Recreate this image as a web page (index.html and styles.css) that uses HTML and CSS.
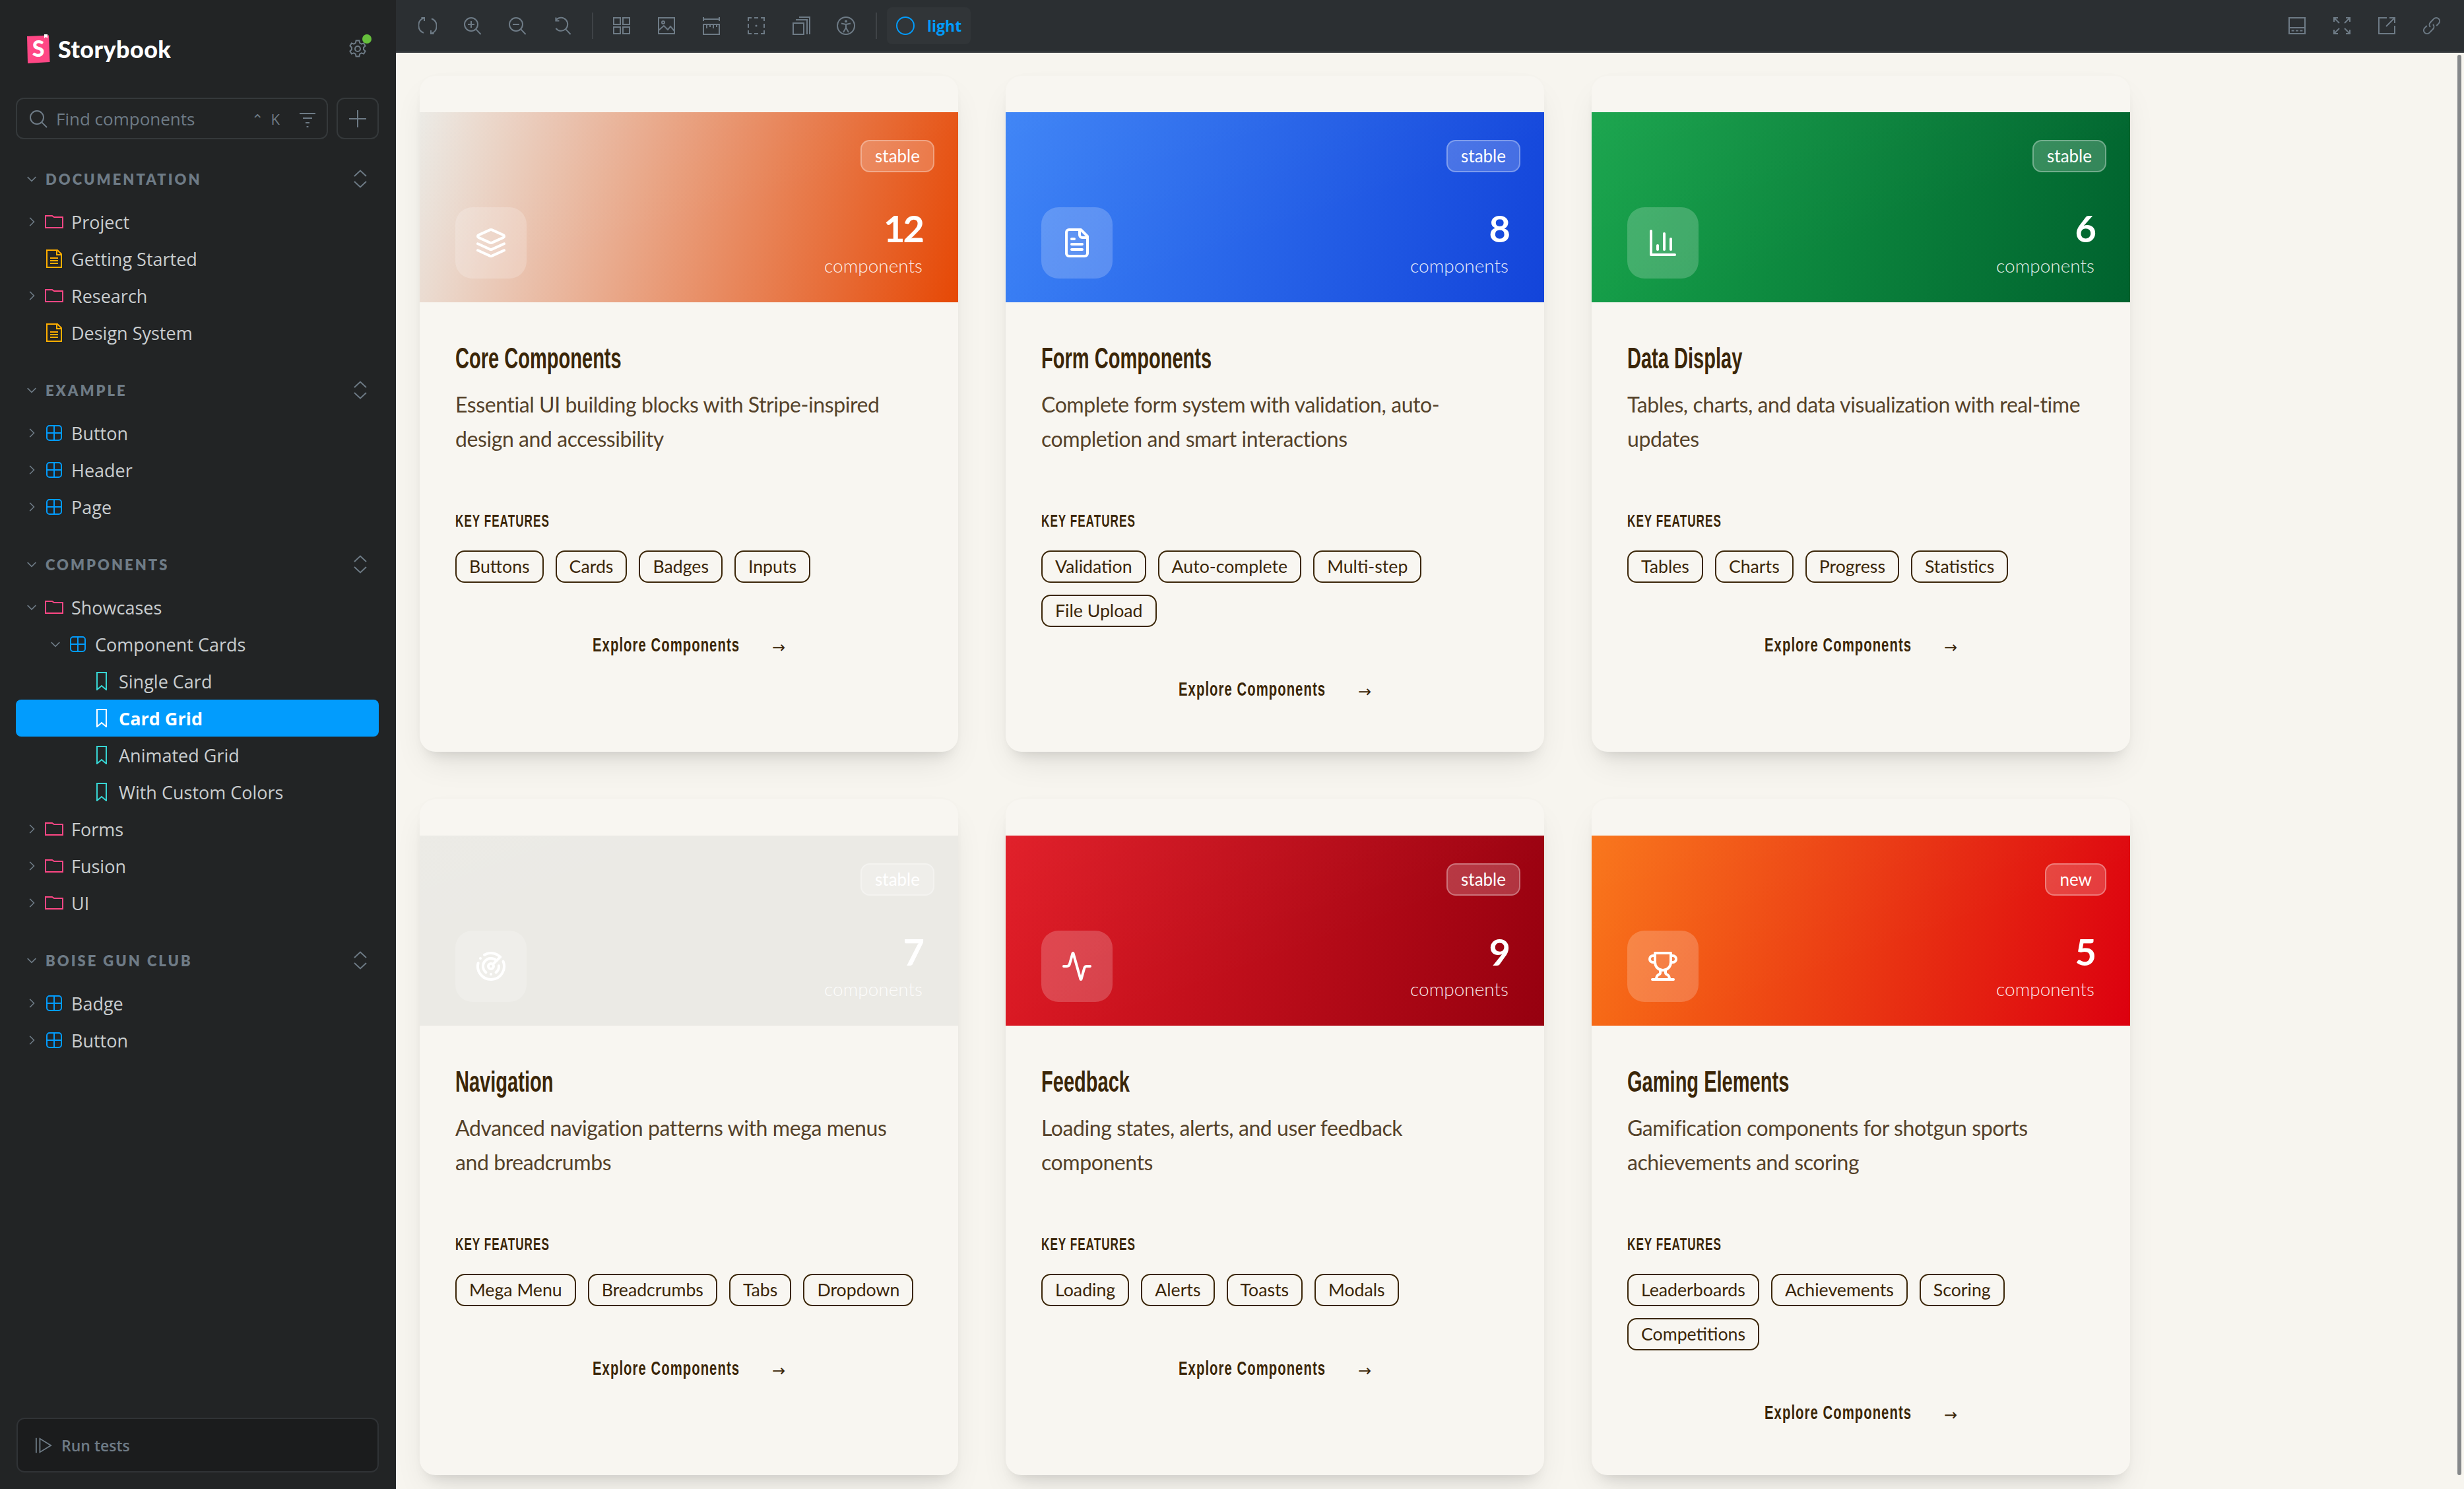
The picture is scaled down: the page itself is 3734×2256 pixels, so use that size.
FILE: index.html
```html
<!DOCTYPE html>
<html lang="en">
<head>
  <meta charset="UTF-8" />
  <title>Showcases / Component Cards / Card Grid - Storybook</title>
  <link rel="stylesheet" href="styles.css">
</head>
<body>

<!-- shared icons -->
<svg class="sprite" xmlns="http://www.w3.org/2000/svg">
  <symbol id="i-down" viewBox="0 0 14 14"><path d="M1.5 4.5 7 10l5.500-5.500"/></symbol>
  <symbol id="i-right" viewBox="0 0 14 14"><path d="M4.500 1.500 10 7l-5.500 5.500"/></symbol>
  <symbol id="i-expand" viewBox="0 0 14 14"><path d="M2.500 5 7 .8 11.500 5M2.500 9 7 13.200 11.500 9"/></symbol>
  <symbol id="i-folder" viewBox="0 0 14 14"><path d="M.5 2.500h5l1.500 1h6.500v8H.5z"/></symbol>
  <symbol id="i-doc" viewBox="0 0 14 14"><path d="M1.500.5h8l3 3v10h-11zM9 .5V4h3.500M4 6.500h6M4 8.500h6M4 10.500h6"/></symbol>
  <symbol id="i-comp" viewBox="0 0 14 14"><rect x="1.500" y="1.500" width="11" height="11" rx="2"/><path d="M7 1.500v11M1.500 7h11"/></symbol>
  <symbol id="i-story" viewBox="0 0 14 14"><path d="M3.500.5h7v13L7 10.500l-3.500 3z"/></symbol>

  <symbol id="t-sync" viewBox="0 0 14 14"><path d="M4 1.200A6 6 0 0 0 4 12.400M10 1.600a6 6 0 0 1 0 11.200M2.200 1h2.300v2.500M11.800 13H9.500v-2.500"/></symbol>
  <symbol id="t-zoomin" viewBox="0 0 14 14"><circle cx="6" cy="6" r="5"/><path d="M9.700 9.700 13.300 13.500M6 3.500v5M3.500 6h5"/></symbol>
  <symbol id="t-zoomout" viewBox="0 0 14 14"><circle cx="6" cy="6" r="5"/><path d="M9.700 9.700 13.300 13.500M3.500 6h5"/></symbol>
  <symbol id="t-reset" viewBox="0 0 14 14"><path d="M2.600 2.300A5 5 0 1 1 2.200 9M2.200.8v2.500h2.500M9.700 9.700 13.300 13.500"/></symbol>
  <symbol id="t-grid" viewBox="0 0 14 14"><path d="M1 1h5v5H1zM8 1h5v5H8zM1 8h5v5H1zM8 8h5v5H8z"/></symbol>
  <symbol id="t-photo" viewBox="0 0 14 14"><rect x="1" y="1" width="12" height="12"/><circle cx="4.500" cy="4.500" r="1"/><path d="M1 10.500 5 7l3 3 2-2.500 3 3.500"/></symbol>
  <symbol id="t-ruler" viewBox="0 0 14 14"><path d="M1 .5v3M13 .5v3M1 2h12M1 6h12v7.500H1zM3.500 6v3M6 6v2M8.500 6v3M11 6v2"/></symbol>
  <symbol id="t-outline" viewBox="0 0 14 14"><path d="M1 3.500V1h2.500M5.500 1h3M10.500 1H13v2.500M13 5.500v3M13 10.500V13h-2.500M8.500 13h-3M3.500 13H1v-2.500M1 8.500v-3"/><circle class="solid" cx="7" cy="7" r=".8"/></symbol>
  <symbol id="t-layers" viewBox="0 0 14 14"><path d="M1 5h8v8.500H1zM3 2.500h8.500v11M5.500.5H13.500v13"/></symbol>
  <symbol id="t-access" viewBox="0 0 14 14"><circle cx="7" cy="7" r="6.500"/><circle class="solid" cx="7" cy="3.600" r="1"/><path d="M3.500 5.300 7 6l3.500-.7M7 6v2.500M7 8.500 5 12M7 8.500 9 12"/></symbol>
  <symbol id="t-panel" viewBox="0 0 14 14"><path d="M1 1h12v12H1zM1 8.500h12M2.800 10.800h2M6 10.800h2M9.200 10.800h2"/></symbol>
  <symbol id="t-full" viewBox="0 0 14 14"><path d="M1 4V1h3M1 1l4 4M13 4V1h-3M13 1 9 5M1 10v3h3M1 13l4-4M13 10v3h-3M13 13 9 9"/></symbol>
  <symbol id="t-share" viewBox="0 0 14 14"><path d="M7 1H1v12h12V7M9 1h4v4M13 1 6.500 7.500"/></symbol>
  <symbol id="t-link" viewBox="0 0 14 14"><path d="M6 8a2.500 2.500 0 0 1 0-3.500l2.700-2.800a2.500 2.500 0 0 1 3.600 3.600L10.600 7M8 6a2.500 2.500 0 0 1 0 3.500l-2.700 2.800a2.500 2.500 0 0 1-3.600-3.600L3.400 7"/></symbol>

  <symbol id="c-layers" viewBox="0 0 24 24"><path d="m12.830 2.180a2 2 0 0 0-1.660 0L2.600 6.080a1 1 0 0 0 0 1.830l8.580 3.910a2 2 0 0 0 1.660 0l8.580-3.900a1 1 0 0 0 0-1.830Z"/><path d="m22 17.650-9.170 4.160a2 2 0 0 1-1.660 0L2 17.650"/><path d="m22 12.650-9.170 4.160a2 2 0 0 1-1.660 0L2 12.650"/></symbol>
  <symbol id="c-file" viewBox="0 0 24 24"><path d="M15 2H6a2 2 0 0 0-2 2v16a2 2 0 0 0 2 2h12a2 2 0 0 0 2-2V7Z"/><path d="M14 2v4a2 2 0 0 0 2 2h4"/><path d="M10 9H8"/><path d="M16 13H8"/><path d="M16 17H8"/></symbol>
  <symbol id="c-chart" viewBox="0 0 24 24"><path d="M3 3v18h18"/><path d="M18 17V9"/><path d="M13 17V5"/><path d="M8 17v-3"/></symbol>
  <symbol id="c-radar" viewBox="0 0 24 24"><path d="M19.070 4.930A10 10 0 0 0 6.990 3.340"/><path d="M4 6h.01"/><path d="M2.290 9.620A10 10 0 1 0 21.310 8.350"/><path d="M16.240 7.760A6 6 0 1 0 8.230 16.670"/><path d="M12 18h.01"/><path d="M17.990 11.660A6 6 0 0 1 15.770 16.670"/><circle cx="12" cy="12" r="2"/><path d="m13.410 10.590 5.660-5.660"/></symbol>
  <symbol id="c-activity" viewBox="0 0 24 24"><path d="M22 12h-2.480a2 2 0 0 0-1.930 1.460l-2.350 8.360a.25.25 0 0 1-.48 0L9.240 2.180a.25.25 0 0 0-.48 0l-2.350 8.360A2 2 0 0 1 4.490 12H2"/></symbol>
  <symbol id="c-trophy" viewBox="0 0 24 24"><path d="M6 9H4.500a2.500 2.500 0 0 1 0-5H6"/><path d="M18 9h1.500a2.500 2.500 0 0 0 0-5H18"/><path d="M4 22h16"/><path d="M10 14.660V17c0 .55-.47.98-.97 1.210C7.850 18.750 7 20.240 7 22"/><path d="M14 14.660V17c0 .55.47.98.97 1.210C16.150 18.750 17 20.240 17 22"/><path d="M18 2H6v7a6 6 0 0 0 12 0V2Z"/></symbol>
</svg>

<div class="app">

  <aside class="sidebar">
    <div class="brand">
      <svg class="brand-mark" viewBox="0 0 36 44">
        <path class="brand-book" d="M1 3 34 1.500 35.500 42 2 44z"/>
        <path class="brand-tab" d="M27 0h5v6l-2.500-2L27 6z"/>
        <text class="brand-s" x="18" y="34" text-anchor="middle">S</text>
      </svg>
      <span class="brand-name">Storybook</span>
      <span class="gear">
        <svg class="gear-icon" viewBox="0 0 14 14"><circle cx="7" cy="7" r="2"/><path d="M5.800.8h2.400l.4 1.800 1.300.7 1.700-.6 1.200 2.100-1.300 1.200v1.500l1.300 1.200-1.200 2.100-1.700-.6-1.300.7-.4 1.800H5.800l-.4-1.800-1.300-.7-1.700.6L1.200 8.700l1.300-1.200V6L1.200 4.800l1.200-2.100 1.700.6 1.300-.7z"/></svg>
        <span class="gear-dot"></span>
      </span>
    </div>

    <div class="search-row">
      <div class="search">
        <svg class="search-icon" viewBox="0 0 14 14"><circle cx="6" cy="6" r="5"/><path d="M9.700 9.700 13.500 13.500"/></svg>
        <span class="search-text">Find components</span>
        <span class="search-key">⌃</span>
        <span class="search-key search-key--k">K</span>
        <svg class="search-filter" viewBox="0 0 14 14"><path d="M1 3h12M3.500 6.500h7M5.500 10h3M6.300 13h1.400"/></svg>
      </div>
      <div class="add">
        <svg class="add-icon" viewBox="0 0 14 14"><path d="M7 .5v13M.5 7h13"/></svg>
      </div>
    </div>

    <nav class="tree">
      <section class="group">
        <div class="group-head">
          <svg class="caret"><use href="#i-down"/></svg><span class="group-label">Documentation</span>
          <svg class="group-toggle"><use href="#i-expand"/></svg>
        </div>
        <div class="row"><svg class="caret"><use href="#i-right"/></svg><svg class="node folder"><use href="#i-folder"/></svg><span>Project</span></div>
        <div class="row"><span class="caret"></span><svg class="node doc"><use href="#i-doc"/></svg><span>Getting Started</span></div>
        <div class="row"><svg class="caret"><use href="#i-right"/></svg><svg class="node folder"><use href="#i-folder"/></svg><span>Research</span></div>
        <div class="row"><span class="caret"></span><svg class="node doc"><use href="#i-doc"/></svg><span>Design System</span></div>
      </section>

      <section class="group">
        <div class="group-head">
          <svg class="caret"><use href="#i-down"/></svg><span class="group-label">Example</span>
          <svg class="group-toggle"><use href="#i-expand"/></svg>
        </div>
        <div class="row"><svg class="caret"><use href="#i-right"/></svg><svg class="node comp"><use href="#i-comp"/></svg><span>Button</span></div>
        <div class="row"><svg class="caret"><use href="#i-right"/></svg><svg class="node comp"><use href="#i-comp"/></svg><span>Header</span></div>
        <div class="row"><svg class="caret"><use href="#i-right"/></svg><svg class="node comp"><use href="#i-comp"/></svg><span>Page</span></div>
      </section>

      <section class="group">
        <div class="group-head">
          <svg class="caret"><use href="#i-down"/></svg><span class="group-label">Components</span>
          <svg class="group-toggle"><use href="#i-expand"/></svg>
        </div>
        <div class="row"><svg class="caret"><use href="#i-down"/></svg><svg class="node folder"><use href="#i-folder"/></svg><span>Showcases</span></div>
        <div class="row row--d1"><svg class="caret"><use href="#i-down"/></svg><svg class="node comp"><use href="#i-comp"/></svg><span>Component Cards</span></div>
        <div class="row row--d2"><span class="caret"></span><svg class="node story"><use href="#i-story"/></svg><span>Single Card</span></div>
        <div class="row row--d2 row--selected"><span class="caret"></span><svg class="node story"><use href="#i-story"/></svg><span>Card Grid</span></div>
        <div class="row row--d2"><span class="caret"></span><svg class="node story"><use href="#i-story"/></svg><span>Animated Grid</span></div>
        <div class="row row--d2"><span class="caret"></span><svg class="node story"><use href="#i-story"/></svg><span>With Custom Colors</span></div>
        <div class="row"><svg class="caret"><use href="#i-right"/></svg><svg class="node folder"><use href="#i-folder"/></svg><span>Forms</span></div>
        <div class="row"><svg class="caret"><use href="#i-right"/></svg><svg class="node folder"><use href="#i-folder"/></svg><span>Fusion</span></div>
        <div class="row"><svg class="caret"><use href="#i-right"/></svg><svg class="node folder"><use href="#i-folder"/></svg><span>UI</span></div>
      </section>

      <section class="group">
        <div class="group-head">
          <svg class="caret"><use href="#i-down"/></svg><span class="group-label">Boise Gun Club</span>
          <svg class="group-toggle"><use href="#i-expand"/></svg>
        </div>
        <div class="row"><svg class="caret"><use href="#i-right"/></svg><svg class="node comp"><use href="#i-comp"/></svg><span>Badge</span></div>
        <div class="row"><svg class="caret"><use href="#i-right"/></svg><svg class="node comp"><use href="#i-comp"/></svg><span>Button</span></div>
      </section>
    </nav>

    <div class="run-tests">
      <svg class="run-icon" viewBox="0 0 14 14"><path d="M1 1v12M4 1.500 13 7l-9 5.500z"/></svg>
      <span>Run tests</span>
    </div>
  </aside>

  <main class="main">
    <header class="toolbar">
      <svg class="tool"><use href="#t-sync"/></svg>
      <svg class="tool"><use href="#t-zoomin"/></svg>
      <svg class="tool"><use href="#t-zoomout"/></svg>
      <svg class="tool"><use href="#t-reset"/></svg>
      <span class="tool-sep"></span>
      <svg class="tool"><use href="#t-grid"/></svg>
      <svg class="tool"><use href="#t-photo"/></svg>
      <svg class="tool"><use href="#t-ruler"/></svg>
      <svg class="tool"><use href="#t-outline"/></svg>
      <svg class="tool"><use href="#t-layers"/></svg>
      <svg class="tool"><use href="#t-access"/></svg>
      <span class="tool-sep"></span>
      <div class="theme-btn"><span class="theme-dot"></span><span>light</span></div>
      <div class="toolbar-right">
        <svg class="tool"><use href="#t-panel"/></svg>
        <svg class="tool"><use href="#t-full"/></svg>
        <svg class="tool"><use href="#t-share"/></svg>
        <svg class="tool"><use href="#t-link"/></svg>
      </div>
    </header>

    <div class="canvas">
      <div class="card-grid">

        <article class="card card--core">
          <div class="card-head">
            <span class="badge">stable</span>
            <span class="card-icon"><svg><use href="#c-layers"/></svg></span>
            <div class="count"><div class="count-num">12</div><div class="count-label">components</div></div>
          </div>
          <div class="card-body">
            <h3>Core Components</h3>
            <p>Essential UI building blocks with Stripe-inspired design and accessibility</p>
            <h4>Key Features</h4>
            <div class="tags"><span class="tag">Buttons</span><span class="tag">Cards</span><span class="tag">Badges</span><span class="tag">Inputs</span></div>
            <div class="explore"><span class="explore-text">Explore Components</span><span class="arrow">→</span></div>
          </div>
        </article>

        <article class="card card--form">
          <div class="card-head">
            <span class="badge">stable</span>
            <span class="card-icon"><svg><use href="#c-file"/></svg></span>
            <div class="count"><div class="count-num">8</div><div class="count-label">components</div></div>
          </div>
          <div class="card-body">
            <h3>Form Components</h3>
            <p>Complete form system with validation, auto-completion and smart interactions</p>
            <h4>Key Features</h4>
            <div class="tags"><span class="tag">Validation</span><span class="tag">Auto-complete</span><span class="tag">Multi-step</span><span class="tag">File Upload</span></div>
            <div class="explore"><span class="explore-text">Explore Components</span><span class="arrow">→</span></div>
          </div>
        </article>

        <article class="card card--data">
          <div class="card-head">
            <span class="badge">stable</span>
            <span class="card-icon"><svg><use href="#c-chart"/></svg></span>
            <div class="count"><div class="count-num">6</div><div class="count-label">components</div></div>
          </div>
          <div class="card-body">
            <h3>Data Display</h3>
            <p>Tables, charts, and data visualization with real-time updates</p>
            <h4>Key Features</h4>
            <div class="tags"><span class="tag">Tables</span><span class="tag">Charts</span><span class="tag">Progress</span><span class="tag">Statistics</span></div>
            <div class="explore"><span class="explore-text">Explore Components</span><span class="arrow">→</span></div>
          </div>
        </article>

        <article class="card card--nav">
          <div class="card-head">
            <span class="badge">stable</span>
            <span class="card-icon"><svg><use href="#c-radar"/></svg></span>
            <div class="count"><div class="count-num">7</div><div class="count-label">components</div></div>
          </div>
          <div class="card-body">
            <h3>Navigation</h3>
            <p>Advanced navigation patterns with mega menus and breadcrumbs</p>
            <h4>Key Features</h4>
            <div class="tags"><span class="tag">Mega Menu</span><span class="tag">Breadcrumbs</span><span class="tag">Tabs</span><span class="tag">Dropdown</span></div>
            <div class="explore"><span class="explore-text">Explore Components</span><span class="arrow">→</span></div>
          </div>
        </article>

        <article class="card card--feedback">
          <div class="card-head">
            <span class="badge">stable</span>
            <span class="card-icon"><svg><use href="#c-activity"/></svg></span>
            <div class="count"><div class="count-num">9</div><div class="count-label">components</div></div>
          </div>
          <div class="card-body">
            <h3>Feedback</h3>
            <p>Loading states, alerts, and user feedback components</p>
            <h4>Key Features</h4>
            <div class="tags"><span class="tag">Loading</span><span class="tag">Alerts</span><span class="tag">Toasts</span><span class="tag">Modals</span></div>
            <div class="explore"><span class="explore-text">Explore Components</span><span class="arrow">→</span></div>
          </div>
        </article>

        <article class="card card--gaming">
          <div class="card-head">
            <span class="badge">new</span>
            <span class="card-icon"><svg><use href="#c-trophy"/></svg></span>
            <div class="count"><div class="count-num">5</div><div class="count-label">components</div></div>
          </div>
          <div class="card-body">
            <h3>Gaming Elements</h3>
            <p>Gamification components for shotgun sports achievements and scoring</p>
            <h4>Key Features</h4>
            <div class="tags"><span class="tag">Leaderboards</span><span class="tag">Achievements</span><span class="tag">Scoring</span><span class="tag">Competitions</span></div>
            <div class="explore"><span class="explore-text">Explore Components</span><span class="arrow">→</span></div>
          </div>
        </article>

      </div>
      <div class="scrollbar"></div>
    </div>
  </main>

</div>

</body>
</html>
```

FILE: styles.css
```css
* {
  box-sizing: border-box;
}
body {
  margin: 0;
  background: #f7f5ef;
  font-family: "Open Sans", sans-serif;
}
.sprite {
  display: none;
}
.app {
  display: grid;
  grid-template-columns: 600px 1fr;
  height: 2256px;
  overflow: hidden;
}

/* sidebar */
.sidebar {
  display: flex;
  flex-direction: column;
  background: #222425;
  padding-top: 52px;
  height: 2256px;
}
.brand {
  display: flex;
  align-items: center;
  height: 44px;
  padding-left: 40px;
}
.brand-mark {
  width: 36px;
  height: 44px;
  margin-right: 12px;
}
.brand-book {
  fill: #ff4785;
}
.brand-tab {
  fill: #fff;
}
.brand-s {
  fill: #fff;
  font-family: "Lato", sans-serif;
  font-weight: 900;
  font-size: 34px;
}
.brand-name {
  color: #fff;
  font-family: "Lato", sans-serif;
  font-weight: 900;
  font-size: 36px;
  letter-spacing: 0.4px;
}
.gear {
  position: relative;
  margin-left: auto;
  margin-right: 44px;
  width: 28px;
  height: 28px;
}
.gear-icon {
  width: 28px;
  height: 28px;
  fill: none;
  stroke: #6e7b86;
  stroke-width: 1;
}
.gear-dot {
  position: absolute;
  top: -8px;
  right: -7px;
  width: 14px;
  height: 14px;
  border-radius: 50%;
  background: #66bf3c;
}
.search-row {
  display: flex;
  gap: 13px;
  margin: 52px 26px 0 24px;
}
.search {
  display: flex;
  align-items: center;
  flex: 1;
  height: 63px;
  padding: 0 15px 0 18px;
  border: 2px solid #35393b;
  border-radius: 12px;
  color: #6e7b86;
  font-size: 26px;
}
.search-icon {
  width: 28px;
  height: 28px;
  margin-right: 13px;
  fill: none;
  stroke: #6e7b86;
  stroke-width: 1;
}
.search-text {
  flex: 1;
}
.search-key {
  font-size: 22px;
}
.search-key--k {
  margin: 0 28px 0 12px;
}
.search-filter {
  width: 28px;
  height: 28px;
  fill: none;
  stroke: #6e7b86;
  stroke-width: 1;
}
.add {
  display: flex;
  align-items: center;
  justify-content: center;
  width: 64px;
  height: 63px;
  border: 2px solid #35393b;
  border-radius: 12px;
}
.add-icon {
  width: 28px;
  height: 28px;
  stroke: #6e7b86;
  stroke-width: 1;
}

.tree {
  display: flex;
  flex-direction: column;
  gap: 39px;
  margin-top: 40px;
}
.group-head {
  display: flex;
  align-items: center;
  height: 40px;
  margin-bottom: 17px;
  padding: 0 40px 0 40px;
}
.group-label {
  margin-left: 13px;
  color: #6e7b86;
  font-family: "Lato", sans-serif;
  font-size: 22px;
  font-weight: 800;
  letter-spacing: 3px;
  text-transform: uppercase;
}
.group-toggle {
  width: 28px;
  height: 32px;
  margin-left: auto;
  fill: none;
  stroke: #6e7b86;
  stroke-width: 1;
}
.caret {
  flex: none;
  width: 16px;
  height: 16px;
  fill: none;
  stroke: #6e7b86;
  stroke-width: 1.400;
}
.row {
  display: flex;
  align-items: center;
  height: 56px;
  margin: 0 26px 0 24px;
  padding-left: 16px;
  border-radius: 8px;
  color: #c9cdcf;
  font-size: 27px;
}
.row--d1 {
  padding-left: 52px;
}
.row--d2 {
  padding-left: 88px;
}
.row--selected {
  background: #029cfd;
  color: #fff;
  font-weight: 700;
}
.node {
  flex: none;
  width: 28px;
  height: 28px;
  margin: 0 12px 0 12px;
  fill: none;
  stroke-width: 1;
}
.folder {
  stroke: #ff4785;
}
.doc {
  stroke: #ffae00;
}
.comp {
  stroke: #029cfd;
}
.story {
  stroke: #37d5d3;
}
.row--selected .story {
  stroke: #fff;
}
.run-tests {
  display: flex;
  align-items: center;
  gap: 14px;
  height: 83px;
  margin: auto 26px 25px 25px;
  padding-left: 26px;
  border: 2px solid #303336;
  border-radius: 12px;
  background: #1b1c1d;
  color: #6e7b86;
  font-size: 23px;
  font-weight: 600;
}
.run-icon {
  width: 26px;
  height: 26px;
  fill: none;
  stroke: #6e7b86;
  stroke-width: 1;
}

/* toolbar */
.main {
  display: flex;
  flex-direction: column;
  min-width: 0;
}
.toolbar {
  display: flex;
  align-items: center;
  flex: none;
  gap: 40px;
  height: 80px;
  padding: 0 35px 0 34px;
  border-bottom: 2px solid #3a3e41;
  background: #2b2f32;
}
.tool {
  flex: none;
  width: 28px;
  height: 28px;
  fill: none;
  stroke: #6e7b86;
  stroke-width: 1;
}
.solid {
  fill: #6e7b86;
  stroke: none;
}
.tool-sep {
  width: 2px;
  height: 40px;
  margin: 0 -11px 0 -9px;
  background: #3f4347;
}
.theme-btn {
  display: flex;
  align-items: center;
  gap: 19px;
  height: 56px;
  margin-left: -14px;
  padding: 0 14px;
  border-radius: 8px;
  background: #313538;
  color: #029cfd;
  font-size: 23px;
  font-weight: 700;
}
.theme-dot {
  width: 28px;
  height: 28px;
  border: 2px solid #029cfd;
  border-radius: 50%;
}
.toolbar-right {
  display: flex;
  gap: 40px;
  margin-left: auto;
}

/* story canvas */
.canvas {
  position: relative;
  flex: 1;
  padding: 35px 36px;
  overflow: hidden;
  background: #f7f5ef;
}
.card-grid {
  display: grid;
  grid-template-columns: repeat(3, 816px);
  grid-auto-rows: 1024px;
  gap: 72px;
}
.card {
  display: flex;
  flex-direction: column;
  padding-top: 55px;
  border-radius: 24px;
  background: #f8f6f1;
  box-shadow: 0 24px 50px -12px rgba(0,0,0,0.1), 0 16px 20px -12px rgba(0,0,0,0.1), 0 0 20px rgba(0,0,0,0.012);
  color: #3b2608;
}
.card-head {
  position: relative;
  display: flex;
  align-items: flex-end;
  justify-content: space-between;
  height: 288px;
  padding: 0 54px 36px;
  color: #fff;
}
.card--core .card-head {
  background: linear-gradient(160deg, rgba(255,255,255,0.03), rgba(255,255,255,0) 60%), linear-gradient(105deg, #ebeae5, #e64805);
}
.card--form .card-head {
  background: linear-gradient(160deg, rgba(255,255,255,0.03), rgba(255,255,255,0) 60%), linear-gradient(105deg, #3b82f6, #1344da);
}
.card--data .card-head {
  background: linear-gradient(160deg, rgba(255,255,255,0.03), rgba(255,255,255,0) 60%), linear-gradient(105deg, #16a34a, #00622e);
}
.card--nav .card-head {
  background: linear-gradient(160deg, rgba(255,255,255,0.03), rgba(255,255,255,0) 60%), #ebeae5;
}
.card--feedback .card-head {
  background: linear-gradient(160deg, rgba(255,255,255,0.03), rgba(255,255,255,0) 60%), linear-gradient(105deg, #e01a24, #96000f);
}
.card--gaming .card-head {
  background: linear-gradient(160deg, rgba(255,255,255,0.03), rgba(255,255,255,0) 60%), linear-gradient(105deg, #f97316, #dc000f);
}
.badge {
  position: absolute;
  top: 42px;
  right: 36px;
  height: 49px;
  padding: 0 20px;
  border: 2px solid rgba(255,255,255,0.3);
  border-radius: 14px;
  background: rgba(255,255,255,0.2);
  font-family: "Lato", sans-serif;
  font-size: 26px;
  line-height: 45px;
}
.card-icon {
  display: flex;
  align-items: center;
  justify-content: center;
  width: 108px;
  height: 108px;
  border-radius: 26px;
  background: rgba(255,255,255,0.2);
}
.card-icon svg {
  width: 48px;
  height: 48px;
  fill: none;
  stroke: #fff;
  stroke-width: 2;
  stroke-linecap: round;
  stroke-linejoin: round;
}
.count {
  margin-bottom: 3px;
  font-family: "Lato", sans-serif;
  text-align: right;
}
.count-num {
  font-size: 56px;
  font-weight: 700;
  line-height: 56px;
  letter-spacing: -3px;
}
.count-label {
  margin-top: 11px;
  font-size: 28px;
  font-weight: 300;
  line-height: 34px;
  opacity: 0.9;
}
.card-body {
  padding: 57px 54px 0;
}
/* condensed heads: no narrow family is installed, so the sans is squeezed */
h3 {
  margin: 0;
  font-family: "Liberation Sans", sans-serif;
  font-size: 44px;
  font-weight: 700;
  line-height: 56px;
  white-space: nowrap;
  transform: scaleX(0.66);
  transform-origin: left center;
}
.card-body p {
  margin: 16px 0 0;
  color: #55422a;
  font-family: "Lato", sans-serif;
  font-size: 32px;
  font-weight: 400;
  line-height: 51.500px;
  letter-spacing: -0.42px;
}
h4 {
  margin: 86px 0 0;
  font-family: "Liberation Sans", sans-serif;
  font-size: 26px;
  font-weight: 700;
  line-height: 26px;
  letter-spacing: 1.500px;
  text-transform: uppercase;
  white-space: nowrap;
  transform: scaleX(0.66);
  transform-origin: left center;
}
.tags {
  display: flex;
  flex-wrap: wrap;
  gap: 18px;
  margin-top: 32px;
}
.tag {
  height: 49px;
  padding: 0 19px;
  border: 2px solid #3b2608;
  border-radius: 14px;
  font-family: "Lato", sans-serif;
  font-size: 26.700px;
  line-height: 45px;
}
.explore {
  display: flex;
  justify-content: center;
  align-items: center;
  height: 40px;
  margin-top: 74px;
}
.explore-text {
  width: 222px;
  font-family: "Liberation Sans", sans-serif;
  font-size: 29px;
  font-weight: 700;
  letter-spacing: 1.500px;
  white-space: nowrap;
  transform: scaleX(0.70);
  transform-origin: left center;
}
.arrow {
  margin-left: 50px;
  padding-top: 8px;
  font-family: "DejaVu Sans", sans-serif;
  font-size: 24px;
}
.scrollbar {
  position: absolute;
  top: 3px;
  right: 4px;
  width: 6px;
  height: 2152px;
  border-radius: 3px;
  background: #85888a;
}
```
